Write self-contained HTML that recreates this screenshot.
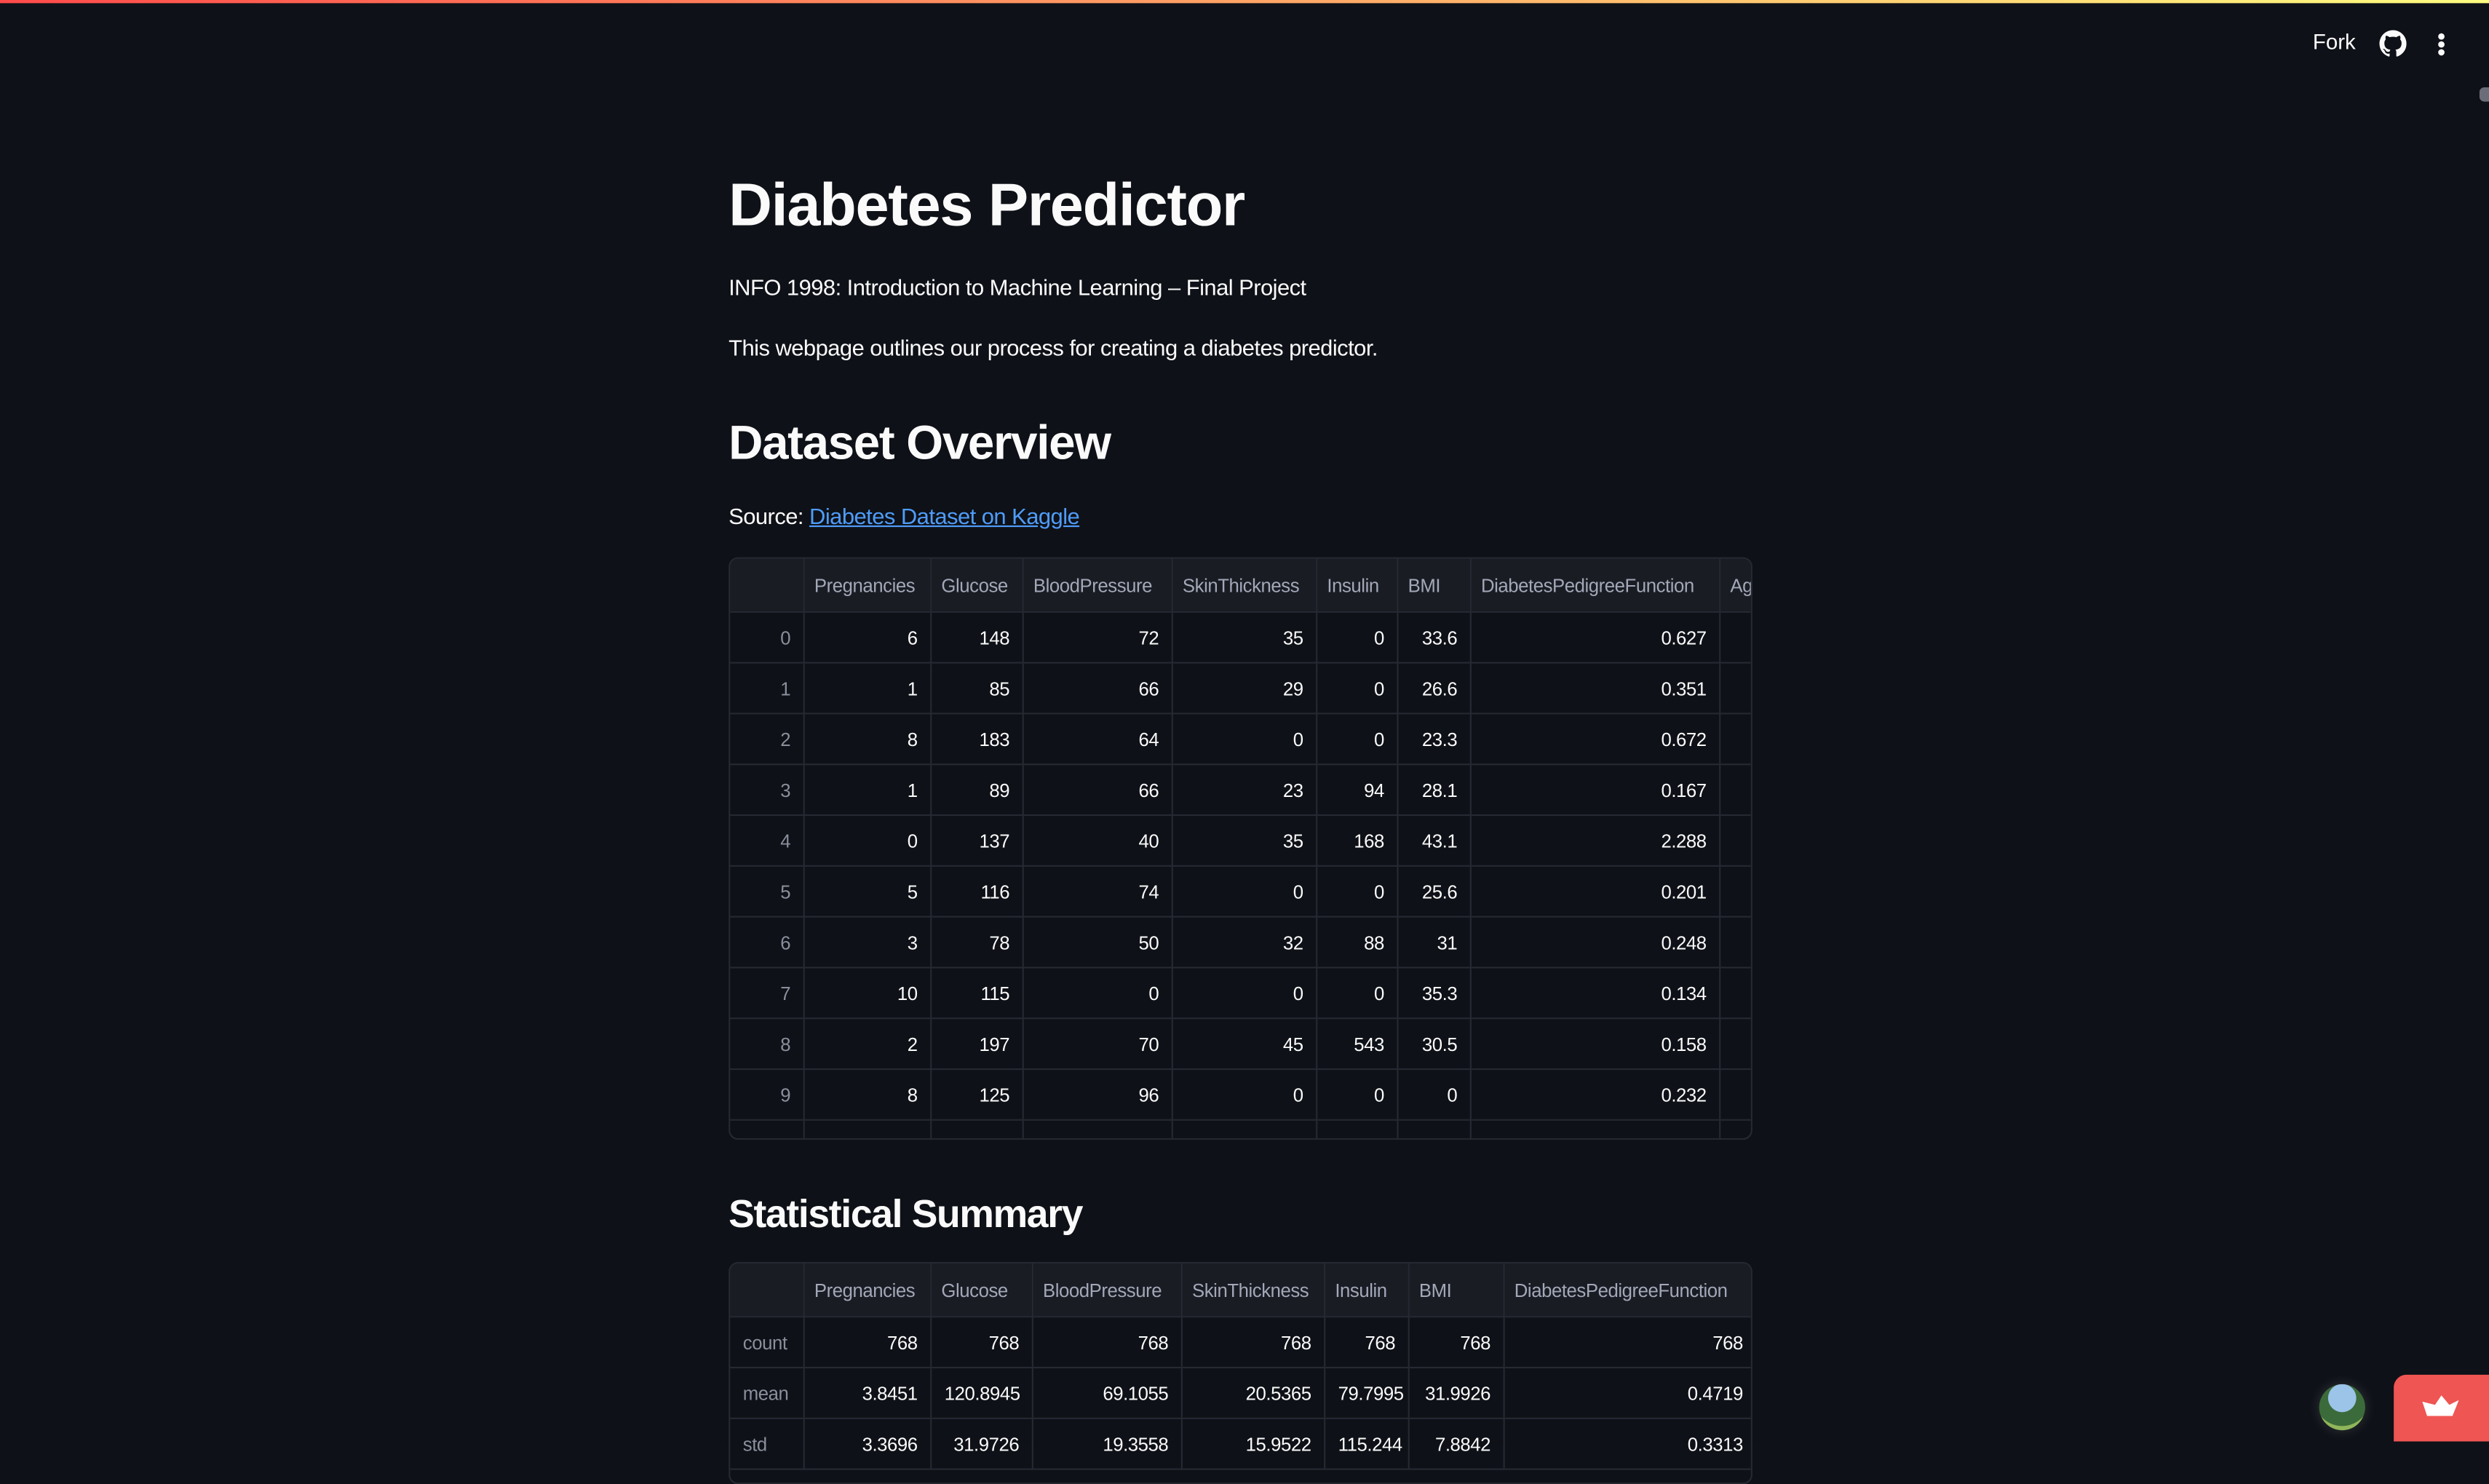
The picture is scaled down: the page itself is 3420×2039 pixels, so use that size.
<!DOCTYPE html>
<html><head><meta charset="utf-8"><style>
html,body{margin:0;padding:0;background:#0e1117;overflow:hidden;width:3420px;height:1980px}
#w{position:absolute;left:0;top:0;width:1568px;height:908px;transform:scale(2.18112);transform-origin:0 0;background:#0e1117;color:#fafafa;font-family:"Liberation Sans",sans-serif}
.a{position:absolute;white-space:nowrap}
.topline{position:absolute;left:0;top:0;width:1568px;height:2px;background:linear-gradient(90deg,#ff4b4b,#fffd80)}
h1{position:absolute;margin:0;font-weight:700;color:#fafafa;letter-spacing:-0.6px}
p{position:absolute;margin:0;font-size:14.2px;letter-spacing:-0.25px}
table{position:absolute;border-collapse:collapse;font-size:11.8px;letter-spacing:-0.2px;table-layout:fixed}
tr{height:32px}
td,th{border:1px solid #262832;height:32px;padding:0 8px;text-align:right;overflow:hidden;white-space:nowrap;box-sizing:border-box}
th{background:#1a1c24;color:#a3a8b8;font-weight:400;text-align:left;padding:0 6px}
td.i{color:#8b8f9c}
.box{position:absolute;border:1px solid #262832;border-radius:6px;box-sizing:border-box;overflow:hidden}
</style></head><body><div id="w">
<div class="topline"></div>
<div class="a" style="left:1457px;top:19px;font-size:13.5px">Fork</div>
<svg class="a" style="left:1499px;top:19px" width="17" height="17" viewBox="0 0 16 16"><path fill="#fafafa" d="M8 0C3.58 0 0 3.58 0 8c0 3.540 2.29 6.53 5.470 7.59.4.07.55-.17.55-.38v-1.33c-2.23.48-2.7-1.07-2.7-1.07-.36-.92-.89-1.17-.89-1.17-.73-.5.05-.49.05-.49.8.06 1.23.83 1.230.83.72 1.22 1.87.87 2.33.66.07-.52.28-.87.51-1.07-1.78-.2-3.650-.89-3.650-3.95 0-.87.31-1.59.82-2.15-.08-.2-.36-1.02.08-2.12 0 0 .67-.21 2.2.82a7.6 7.6 0 0 1 4 0c1.53-1.04 2.2-.82 2.2-.82.44 1.1.16 1.92.08 2.12.51.56.82 1.27.82 2.15 0 3.07-1.87 3.75-3.65 3.95.29.25.54.73.54 1.48v2.2c0 .21.15.46.55.38A8 8 0 0 0 16 8c0-4.42-3.58-8-8-8z"/></svg>
<div class="a" style="left:1536px;top:21px;width:4px;height:4px;border-radius:2px;background:#fafafa;box-shadow:0 5px 0 #fafafa,0 10px 0 #fafafa"></div>
<div class="a" style="left:1562px;top:55px;width:6px;height:9px;border-radius:3px 0 0 3px;background:#6b6e78"></div>

<h1 style="left:459px;top:109px;font-size:38px">Diabetes Predictor</h1>
<p style="left:459px;top:174px">INFO 1998: Introduction to Machine Learning – Final Project</p>
<p style="left:459px;top:212px">This webpage outlines our process for creating a diabetes predictor.</p>
<h1 style="left:459px;top:263px;font-size:30px">Dataset Overview</h1>
<p style="left:459px;top:318px">Source: <span style="color:#4f9cf9;text-decoration:underline">Diabetes Dataset on Kaggle</span></p>

<div class="box" style="left:459px;top:351px;width:645px;height:367px">
<table style="left:-1px;top:-1px;width:647px">
<colgroup><col style="width:47px"><col style="width:80px"><col style="width:58px"><col style="width:94px"><col style="width:91px"><col style="width:51px"><col style="width:46px"><col style="width:157px"><col style="width:23px"></colgroup>
<tr style="height:34px"><th style="height:34px"></th><th>Pregnancies</th><th>Glucose</th><th>BloodPressure</th><th>SkinThickness</th><th>Insulin</th><th>BMI</th><th>DiabetesPedigreeFunction</th><th>Ag</th></tr>
<tr><td class="i">0</td><td>6</td><td>148</td><td>72</td><td>35</td><td>0</td><td>33.6</td><td>0.627</td><td></td></tr>
<tr><td class="i">1</td><td>1</td><td>85</td><td>66</td><td>29</td><td>0</td><td>26.6</td><td>0.351</td><td></td></tr>
<tr><td class="i">2</td><td>8</td><td>183</td><td>64</td><td>0</td><td>0</td><td>23.3</td><td>0.672</td><td></td></tr>
<tr><td class="i">3</td><td>1</td><td>89</td><td>66</td><td>23</td><td>94</td><td>28.1</td><td>0.167</td><td></td></tr>
<tr><td class="i">4</td><td>0</td><td>137</td><td>40</td><td>35</td><td>168</td><td>43.1</td><td>2.288</td><td></td></tr>
<tr><td class="i">5</td><td>5</td><td>116</td><td>74</td><td>0</td><td>0</td><td>25.6</td><td>0.201</td><td></td></tr>
<tr><td class="i">6</td><td>3</td><td>78</td><td>50</td><td>32</td><td>88</td><td>31</td><td>0.248</td><td></td></tr>
<tr><td class="i">7</td><td>10</td><td>115</td><td>0</td><td>0</td><td>0</td><td>35.3</td><td>0.134</td><td></td></tr>
<tr><td class="i">8</td><td>2</td><td>197</td><td>70</td><td>45</td><td>543</td><td>30.5</td><td>0.158</td><td></td></tr>
<tr><td class="i">9</td><td>8</td><td>125</td><td>96</td><td>0</td><td>0</td><td>0</td><td>0.232</td><td></td></tr>
<tr><td></td><td></td><td></td><td></td><td></td><td></td><td></td><td></td><td></td></tr>
</table>
</div>

<h1 style="left:459px;top:752px;font-size:24.5px">Statistical Summary</h1>
<div class="box" style="left:459px;top:795px;width:645px;height:140px">
<table style="left:-1px;top:-1px;width:647px">
<colgroup><col style="width:47px"><col style="width:80px"><col style="width:64px"><col style="width:94px"><col style="width:90px"><col style="width:53px"><col style="width:60px"><col style="width:159px"></colgroup>
<tr style="height:34px"><th style="height:34px"></th><th>Pregnancies</th><th>Glucose</th><th>BloodPressure</th><th>SkinThickness</th><th>Insulin</th><th>BMI</th><th>DiabetesPedigreeFunction</th></tr>
<tr><td class="i" style="text-align:left">count</td><td>768</td><td>768</td><td>768</td><td>768</td><td>768</td><td>768</td><td>768</td></tr>
<tr><td class="i" style="text-align:left">mean</td><td>3.8451</td><td>120.8945</td><td>69.1055</td><td>20.5365</td><td>79.7995</td><td>31.9926</td><td>0.4719</td></tr>
<tr><td class="i" style="text-align:left">std</td><td>3.3696</td><td>31.9726</td><td>19.3558</td><td>15.9522</td><td>115.244</td><td>7.8842</td><td>0.3313</td></tr>
</table>
</div>

<div class="a" style="left:1461px;top:872px;width:29px;height:29px;border-radius:50%;background:radial-gradient(circle at 50% 30%,#9cc3e8 0 35%,#3b6b3a 36% 70%,#8fb65a 71%);box-shadow:0 0 8px rgba(255,255,255,0.15)"></div>
<div class="a" style="left:1508px;top:866px;width:60px;height:42px;border-radius:8px 0 0 0;background:#ef5552"></div>
<svg class="a" style="left:1526px;top:879px" width="24" height="14" viewBox="0 0 24 14"><path fill="#fff" d="M0 4 L8 6 L12 0 L17 6 L23 3 L19 13 L3 13 Z"/></svg>
</div></body></html>
